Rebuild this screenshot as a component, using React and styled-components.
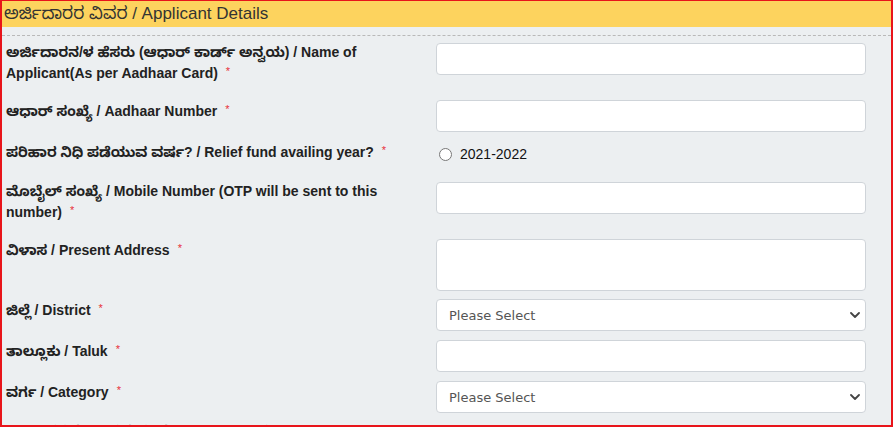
import React from 'react';
import styled, { createGlobalStyle } from 'styled-components';

const GlobalStyle = createGlobalStyle`
    html, body {
        margin: 0;
        padding: 0;
        width: 893px;
        height: 427px;
        overflow: hidden;
        background: #ffffff;
    }
`;

const fields = [
    { kn: 'ಅರ್ಜಿದಾರನ/ಳ ಹೆಸರು (ಆಧಾರ್ ಕಾರ್ಡ್ ಅನ್ವಯ)', en: 'Name of Applicant(As per Aadhaar Card)', type: 'input' },
    { kn: 'ಆಧಾರ್ ಸಂಖ್ಯೆ', en: 'Aadhaar Number', type: 'input' },
    { kn: 'ಪರಿಹಾರ ನಿಧಿ ಪಡೆಯುವ ವರ್ಷ?', en: 'Relief fund availing year?', type: 'radio' },
    { kn: 'ಮೊಬೈಲ್ ಸಂಖ್ಯೆ', en: 'Mobile Number (OTP will be sent to this number)', type: 'input' },
    { kn: 'ವಿಳಾಸ', en: 'Present Address', type: 'textarea' },
    { kn: 'ಜಿಲ್ಲೆ', en: 'District', type: 'select' },
    { kn: 'ತಾಲ್ಲೂಕು', en: 'Taluk', type: 'input' },
    { kn: 'ವರ್ಗ', en: 'Category', type: 'select' },
    { kn: 'ಕಾರ್ಮಿಕರ ನೋಂದಣಿ ಸಂಖ್ಯೆ ಹಾಗೂ ದಿನಾಂಕ', en: 'Registration Number', type: 'none' },
];

const Chevron = () => (
    <svg width="10" height="6" viewBox="0 0 10 6">
        <path d="M1 1l4 4 4-4" fill="none" stroke="#444" strokeWidth="1.8" strokeLinecap="round" strokeLinejoin="round" />
    </svg>
);

const Control = ({ type }) => {
    if (type === 'radio') {
        return (
            <RadioLine>
                <input type="radio" name="year" />
                <span>2021-2022</span>
            </RadioLine>
        );
    }
    if (type === 'textarea') return <TextArea />;
    if (type === 'select') {
        return (
            <SelectBox>
                <span>Please Select</span>
                <Chevron />
            </SelectBox>
        );
    }
    if (type === 'none') return <div />;
    return <TextInput type="text" />;
};

const App = () => {
    return (
        <>
            <GlobalStyle />
            <Frame>
                <Header>ಅರ್ಜಿದಾರರ ವಿವರ / Applicant Details</Header>
                <Body>
                    <Divider />
                    {fields.map((f) => (
                        <Row key={f.en}>
                            <Label>
                                {f.kn} / {f.en}
                                <Star>*</Star>
                            </Label>
                            <Control type={f.type} />
                        </Row>
                    ))}
                </Body>
            </Frame>
        </>
    );
};

export default App;

const Frame = styled.div`
    box-sizing: border-box;
    width: 893px;
    height: 427px;
    border: 2px solid #e8141a;
    border-top-width: 1px;
    background: #eceff1;
    overflow: hidden;
    font-family: "Liberation Sans", Arial, "Noto Sans Kannada", "Noto Sans", sans-serif;
`;

const Header = styled.div`
    height: 26px;
    line-height: 26px;
    padding: 0 2px;
    background: #fdd35e;
    color: #333;
    font-size: 17px;
`;

const Body = styled.div`
    padding-top: 8px;
`;

const Divider = styled.div`
    border-top: 1px dashed #b9b9b9;
    margin-bottom: 7px;
`;

const Row = styled.div`
    display: grid;
    grid-template-columns: 415px 430px;
    column-gap: 15px;
    align-items: start;
    padding-left: 4px;
    margin-bottom: 8px;
`;

const Label = styled.div`
    font-size: 14px;
    font-weight: bold;
    line-height: 19px;
    min-height: 24px;
    color: #222;
    margin-bottom: 9px;
`;

const Star = styled.span`
    color: #e8303a;
    font-size: 11px;
    font-weight: normal;
    vertical-align: 3px;
    margin-left: 8px;
`;

const fieldBase = `
    box-sizing: border-box;
    width: 430px;
    border: 1px solid #cfd4d9;
    border-radius: 4px;
    background: #fff;
    margin: 0;
`;

const TextInput = styled.input`
    ${fieldBase}
    height: 32px;
    padding: 0 12px;
`;

const TextArea = styled.textarea`
    ${fieldBase}
    display: block;
    height: 52px;
    resize: none;
`;

const SelectBox = styled.div`
    ${fieldBase}
    height: 32px;
    display: flex;
    align-items: center;
    justify-content: space-between;
    padding: 0 5px 0 12px;
    font-family: "DejaVu Sans", Verdana, sans-serif;
    font-size: 13px;
    color: #555;
`;

const RadioLine = styled.label`
    display: flex;
    align-items: center;
    height: 26px;
    font-size: 14px;
    color: #111;

    input {
        width: 13px;
        height: 13px;
        margin: 0 8px 0 3px;
    }
`;
